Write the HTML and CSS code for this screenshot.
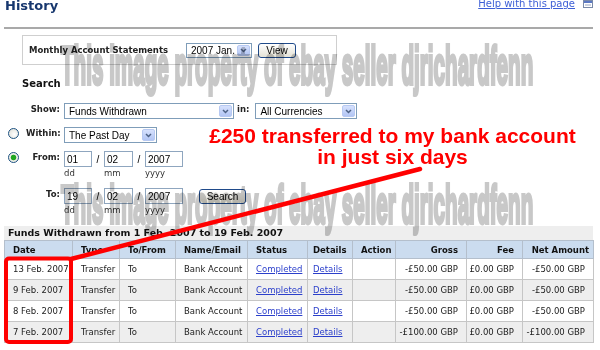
FILE: index.html
```html
<!DOCTYPE html>
<html>
<head>
<meta charset="utf-8">
<title>History</title>
<link rel="stylesheet" href="styles.css">
</head>
<body>
<div class="page">
  <header class="top">
    <h1 class="title">History</h1>
    <div class="help">
      <a href="#">Help with this page</a>
      <svg class="help-icon" width="10" height="8" viewBox="0 0 10 8"><rect x="0.5" y="0.5" width="9" height="7" fill="#fff" stroke="#7a8aa8"/><rect x="1" y="1" width="8" height="2" fill="#5b78c4"/><path d="M2 5h6" stroke="#9aa6c0"/></svg>
    </div>
  </header>
  <div class="rule"></div>

  <div class="stmt">
    <span class="stmt-label">Monthly Account Statements</span>
    <span class="sel sel-month"><select><option>2007 Jan.</option></select><span class="arr"><svg width="7" height="5" viewBox="0 0 7 5"><path d="M1 1l2.5 2.5L6 1" stroke="#4d6185" stroke-width="1.5" fill="none"/></svg></span></span>
    <button class="btn btn-view">View</button>
  </div>

  <h2 class="search-h">Search</h2>

  <div class="form">
    <div class="frow">
      <span></span>
      <label class="lbl">Show:</label>
      <div class="ctl">
        <span class="sel sel-show"><select><option>Funds Withdrawn</option></select><span class="arr"><svg width="7" height="5" viewBox="0 0 7 5"><path d="M1 1l2.5 2.5L6 1" stroke="#4d6185" stroke-width="1.5" fill="none"/></svg></span></span>
        <label class="lbl lbl-in">in:</label>
        <span class="sel sel-cur"><select><option>All Currencies</option></select><span class="arr"><svg width="7" height="5" viewBox="0 0 7 5"><path d="M1 1l2.5 2.5L6 1" stroke="#4d6185" stroke-width="1.5" fill="none"/></svg></span></span>
      </div>
    </div>

    <div class="frow">
      <span class="radio"></span>
      <label class="lbl">Within:</label>
      <div class="ctl">
        <span class="sel sel-within"><select><option>The Past Day</option></select><span class="arr"><svg width="7" height="5" viewBox="0 0 7 5"><path d="M1 1l2.5 2.5L6 1" stroke="#4d6185" stroke-width="1.5" fill="none"/></svg></span></span>
      </div>
    </div>

    <div class="frow">
      <span class="radio on"></span>
      <label class="lbl">From:</label>
      <div class="ctl">
        <div class="df"><input class="di di-d" value="01"><span class="sub">dd</span></div>
        <span class="slash">/</span>
        <div class="df"><input class="di di-m" value="02"><span class="sub">mm</span></div>
        <span class="slash">/</span>
        <div class="df"><input class="di di-y" value="2007"><span class="sub">yyyy</span></div>
      </div>
    </div>

    <div class="frow frow-to">
      <span></span>
      <label class="lbl">To:</label>
      <div class="ctl">
        <div class="df"><input class="di di-d" value="19"><span class="sub">dd</span></div>
        <span class="slash">/</span>
        <div class="df"><input class="di di-m" value="02"><span class="sub">mm</span></div>
        <span class="slash">/</span>
        <div class="df"><input class="di di-y" value="2007"><span class="sub">yyyy</span></div>
        <button class="btn btn-search">Search</button>
      </div>
    </div>
  </div>

  <div class="results">
    <div class="caption">Funds Withdrawn from 1 Feb. 2007 to 19 Feb. 2007</div>
    <table class="tbl">
      <colgroup>
        <col style="width:68px"><col style="width:47px"><col style="width:56px"><col style="width:72px"><col style="width:60px"><col style="width:45px"><col style="width:43px"><col style="width:71px"><col style="width:56px"><col style="width:71px">
      </colgroup>
      <thead>
        <tr><th>Date</th><th>Type</th><th>To/From</th><th>Name/Email</th><th>Status</th><th class="det">Details</th><th>Action</th><th class="r">Gross</th><th class="r">Fee</th><th class="r net">Net Amount</th></tr>
      </thead>
      <tbody>
        <tr><td>13 Feb. 2007</td><td>Transfer</td><td>To</td><td>Bank Account</td><td><a href="#">Completed</a></td><td class="det"><a href="#">Details</a></td><td></td><td class="r">-£50.00 GBP</td><td class="r">£0.00 GBP</td><td class="r">-£50.00 GBP</td></tr>
        <tr><td>9 Feb. 2007</td><td>Transfer</td><td>To</td><td>Bank Account</td><td><a href="#">Completed</a></td><td class="det"><a href="#">Details</a></td><td></td><td class="r">-£50.00 GBP</td><td class="r">£0.00 GBP</td><td class="r">-£50.00 GBP</td></tr>
        <tr><td>8 Feb. 2007</td><td>Transfer</td><td>To</td><td>Bank Account</td><td><a href="#">Completed</a></td><td class="det"><a href="#">Details</a></td><td></td><td class="r">-£50.00 GBP</td><td class="r">£0.00 GBP</td><td class="r">-£50.00 GBP</td></tr>
        <tr><td>7 Feb. 2007</td><td>Transfer</td><td>To</td><td>Bank Account</td><td><a href="#">Completed</a></td><td class="det"><a href="#">Details</a></td><td></td><td class="r">-£100.00 GBP</td><td class="r">£0.00 GBP</td><td class="r">-£100.00 GBP</td></tr>
      </tbody>
    </table>
  </div>

  <div class="watermark wm1">This image property of ebay seller djrichardfenn</div>
  <div class="watermark wm2">This image property of ebay seller djrichardfenn</div>

  <svg class="annot" width="600" height="350" viewBox="0 0 600 350">
    <line x1="71" y1="259" x2="420" y2="169" stroke="#ff0000" stroke-width="4.5" stroke-linecap="round"/>
    <rect x="6" y="258.5" width="65" height="83.5" rx="3" fill="none" stroke="#ff0000" stroke-width="4"/>
  </svg>
  <div class="note">£250 transferred to my bank account<br>in just six days</div>
</div>
</body>
</html>
```

FILE: styles.css
```css
* { box-sizing: border-box; }

body {
  margin: 0;
  background: #fff;
  font-family: "DejaVu Sans", Verdana, sans-serif;
  color: #000;
}

.page {
  position: relative;
  width: 600px;
  height: 350px;
  overflow: hidden;
}

/* header */
.top {
  display: flex;
  justify-content: space-between;
  align-items: flex-start;
  height: 27px;
  padding: 0 7px 0 5px;
}
.title {
  margin: 0;
  font-size: 13px;
  line-height: 12px;
  font-weight: bold;
  color: #17376e;
}
.help {
  display: flex;
  align-items: flex-start;
  gap: 8px;
}
.help a {
  font-size: 10px;
  line-height: 8px;
  color: #3d5fd6;
  text-decoration: underline;
}
.help-icon { display: block; }

.rule {
  height: 2px;
  margin: 0 7px 0 4px;
  background: #a9a9a9;
}

/* statement box */
.stmt {
  margin: 6px 0 0 22px;
  width: 315px;
  height: 30px;
  border: 1px solid #cfcfcf;
  display: flex;
  align-items: center;
  padding-left: 6px;
}
.stmt-label {
  flex: 0 0 157px;
  font-size: 8.5px;
  font-weight: bold;
  color: #222;
}

/* select look-alike */
.sel {
  position: relative;
  display: inline-block;
  height: 16px;
}
.sel select {
  -webkit-appearance: none;
  appearance: none;
  display: block;
  width: 100%;
  height: 100%;
  margin: 0;
  border: 1px solid #7f9db9;
  border-radius: 0;
  background: #fff;
  padding: 0 0 0 4px;
  font: 10px "Liberation Sans", Arial, sans-serif;
  color: #000;
}
.sel .arr {
  position: absolute;
  right: 2px;
  top: 2px;
  bottom: 2px;
  width: 13px;
  border: 1px solid #b7c9f2;
  border-radius: 2px;
  background: linear-gradient(#d6e1fd, #b2c5f4);
  display: flex;
  align-items: center;
  justify-content: center;
}
.sel-month { width: 66px; height: 15px; }
.sel-show { width: 170px; }
.sel-cur { width: 102px; }
.sel-within { width: 93px; }

.btn {
  height: 15px;
  margin: 0;
  padding: 0;
  border: 1px solid #1f4a8a;
  border-radius: 3px;
  background: linear-gradient(#ffffff, #e4e2d6);
  font: 10px "Liberation Sans", Arial, sans-serif;
  color: #000;
  line-height: 13px;
}
.btn-view { width: 38px; margin-left: 6px; }
.btn-search { width: 47px; margin: 1px 0 0 16px; }

/* search form */
.search-h {
  margin: 13px 0 0 22px;
  font-size: 10px;
  line-height: 12px;
  font-weight: bold;
  color: #111;
}
.form { margin-top: 13px; }
.frow {
  display: grid;
  grid-template-columns: 26px 34px auto;
  align-items: start;
}
.frow + .frow { margin-top: 8px; }
.frow.frow-to { margin-top: 9px; }

.lbl {
  font-size: 8.5px;
  line-height: 12px;
  font-weight: bold;
  text-align: right;
  color: #222;
}
.lbl-in { margin: 0 6px 0 3px; }

.ctl {
  display: flex;
  align-items: flex-start;
  padding-left: 4px;
}

.radio {
  display: block;
  width: 11px;
  height: 11px;
  margin: 1px 0 0 8px;
  border: 1px solid #1d5281;
  border-radius: 50%;
  background: radial-gradient(circle at 60% 60%, #ffffff 0, #dcdcd4 100%);
}
.radio.on {
  background: radial-gradient(circle, #21a621 0 2.4px, #eeeee8 3.2px);
}

.df {
  display: flex;
  flex-direction: column;
}
.di {
  height: 16px;
  margin: 0;
  padding: 0 0 0 2px;
  border: 1px solid #8fa6bf;
  font: 10px "Liberation Sans", Arial, sans-serif;
  color: #000;
  background: #fff;
}
.di-d { width: 28px; }
.di-m { width: 29px; }
.di-y { width: 38px; }
.sub {
  font-size: 8.5px;
  line-height: 12px;
  color: #333;
}
.slash {
  width: 12px;
  text-align: center;
  font: 10px/18px "Liberation Sans", Arial, sans-serif;
}

/* results */
.results { margin-top: 10px; }
.caption {
  margin: 0 7px 0 4px;
  height: 14px;
  background: #eeeeee;
  padding-left: 4px;
  font-size: 9.5px;
  line-height: 14px;
  font-weight: bold;
  color: #111;
}
.tbl {
  margin-left: 4px;
  width: 589px;
  border-collapse: collapse;
  table-layout: fixed;
  font-size: 8.5px;
}
.tbl thead tr { height: 18px; }
.tbl tbody tr { height: 21px; }
.tbl th {
  background: #cbdcef;
  font-weight: bold;
  text-align: left;
  padding: 0 0 0 8px;
  border: 1px solid #b4bfcc;
  white-space: nowrap;
  color: #111;
}
.tbl td {
  padding: 0 0 0 8px;
  border: 1px solid #c6c6c6;
  white-space: nowrap;
  overflow: hidden;
  color: #222;
}
.tbl tbody tr:nth-child(even) td { background: #eeeeee; }
.tbl .det { padding-left: 5px; }
.tbl .r { text-align: right; padding: 0 8px 0 0; }
.tbl th.net { padding-right: 4px; }
.tbl a { color: #2b3fcb; text-decoration: underline; }

/* watermark overlay */
.watermark {
  position: absolute;
  left: 61px;
  font: bold 54px/54px "Liberation Sans", Arial, sans-serif;
  color: #c8c8c8;
  -webkit-text-stroke: 4px #c8c8c8;
  white-space: nowrap;
  transform: scaleX(0.382);
  transform-origin: left top;
  mix-blend-mode: multiply;
  pointer-events: none;
}
.wm1 { top: 38px; }
.wm2 { top: 177px; }

/* annotations */
.annot {
  position: absolute;
  left: 0;
  top: 0;
  pointer-events: none;
}
.note {
  position: absolute;
  left: 200px;
  top: 125px;
  width: 385px;
  text-align: center;
  font: bold 21px/21px "Liberation Sans", Arial, sans-serif;
  color: #ff0000;
}
```
